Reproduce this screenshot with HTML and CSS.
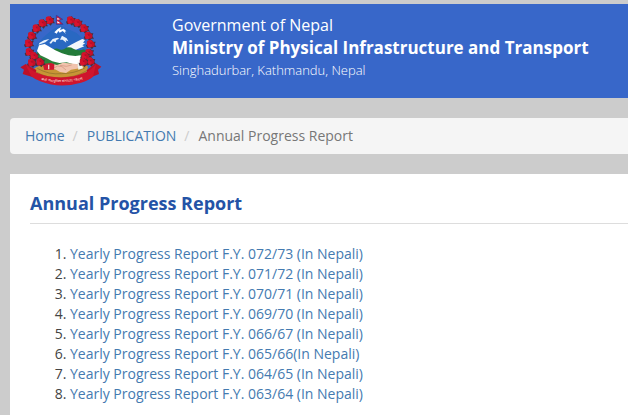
FILE: index.html
```html
<!DOCTYPE html>
<html lang="en">

<head>
    <meta charset="UTF-8" />
    <meta name="viewport" content="width=device-width, initial-scale=1.0" />
    <title>Annual Progress Report</title>
    <link rel="stylesheet" href="styles.css">
</head>

<body>
    <div class="wrapper">
        <header class="header">
            <svg class="logo" viewBox="60 45 246 216" role="img" aria-label="Emblem of Nepal">
                <defs>
                    <g id="flower">
                        <path d="M-14 5l6-4-2-9 8 2 5-6 5 6 7 0-3 8 5 8-8 0-5 7-6-6-9 2z" fill="#4a2f3a" />
                        <circle r="9" cx="-2" cy="-2" fill="#d3122b" />
                        <circle r="8" cx="4" cy="2" fill="#c20f28" />
                        <circle r="7" cx="-3" cy="5" fill="#d8142d" />
                        <circle r="2" cx="1" cy="-1" fill="#a50d2a" />
                    </g>
                    <path id="motto" d="M98 234Q180 266 272 234" />
                </defs>
                <!-- hills and mountains -->
                <path d="M105 142L135 110 160 90 182 79 205 91 230 102 252 122 260 140 255 190 110 190z" fill="#2968c2" />
                <path d="M163 100l10-10 11-6-4 9 11-4 8 8-5 1 4 7-10-9-9 5-4-5-5 8z" fill="#fff" />
                <path d="M148 132l10-12 14-4 6 3-9 4-2 7-8-3-6 7zM180 122l6-12 14 8 5 9-8-3 2 7-11-9zM118 132l14-8 16-4-12 10-20 7z" fill="#e8f1fb" />
                <path d="M200 145l13-8 17-9 17-8 8 3-6 8 7 1-9 7 6 3-13 5-16 7-9-5z" fill="#f3f7fc" />
                <path d="M160 150q9-3 14-1 10 6 20 0 13-8 26 0 16 9 32 2l11 8-10 30-126-1z" fill="#237b39" />
                <path d="M110 158l18 10 27 3 29 8 29 6 20-2v17H119z" fill="#2e813b" />
                <!-- map -->
                <path d="M117 139l17-4 14 8 18 11 20 9 20 6 20 2 16-2-1 25-20 2-21-6-22 2-21-5-17-9-19-9-10-13z" fill="#fff" />
                <!-- rice and clasped hands -->
                <path d="M101 211q20-18 41-7 43 14 88-4 22-8 34 3l-9 35q-75 25-145-4z" fill="#c79535" />
                <path d="M106 218q40 22 78 18 43 0 76-21M112 208q35 20 72 16 40 0 72-18" fill="none" stroke="#8b6b29" stroke-width="2" />
                <path d="M132 198l24-4 15 4 18-7 48 5 2 12-26 4-15 10-18-3-15-8-32-3z" fill="#f1c3ad" />
                <path d="M160 208l13-7 13 2 12 10M180 199l19 3 16-4" fill="none" stroke="#cf917b" stroke-width="2" />
                <path d="M128 195l25-3 10 4-1 16-29 1z" fill="#cf1830" />
                <path d="M144 197l4 0v14h-4z" fill="#f2cfca" />
                <path d="M232 190l11-3 6 21-14 4z" fill="#f0f4ed" />
                <!-- wreath -->
                <use href="#flower" x="148" y="63" />
                <use href="#flower" x="127" y="72" />
                <use href="#flower" x="109" y="87" />
                <use href="#flower" x="95" y="109" />
                <use href="#flower" x="86" y="132" />
                <use href="#flower" x="88" y="158" />
                <use href="#flower" x="102" y="170" />
                <use href="#flower" x="95" y="190" />
                <use href="#flower" x="120" y="188" />
                <use href="#flower" x="212" y="63" />
                <use href="#flower" x="233" y="71" />
                <use href="#flower" x="252" y="87" />
                <use href="#flower" x="265" y="109" />
                <use href="#flower" x="272" y="134" />
                <use href="#flower" x="267" y="160" />
                <use href="#flower" x="255" y="170" />
                <use href="#flower" x="271" y="186" />
                <use href="#flower" x="250" y="188" />
                <!-- flag -->
                <path d="M169 49l19 12-11 3 12 12h-20z" fill="#d4173a" stroke="#213d9d" stroke-width="2" />
                <path d="M172 56l8 5-8 1zM172 66l9 7h-9z" fill="#fff" />
                <!-- ribbon -->
                <path d="M77 195l-16 10 11 7-4 13 36 11 5-23z" fill="#bd1028" />
                <path d="M287 193l17 10-10 9 3 13-31 13-6-24z" fill="#bd1028" />
                <path d="M76 196q16 17 30 24 76 31 152 0 18-8 30-24l-9 37q-12 11-36 18-64 19-122-4-16-5-27-15z" fill="#cf152d" />
                <text class="motto"><textPath href="#motto" startOffset="50%">जननी जन्मभूमिश्च स्वर्गादपि गरीयसी</textPath></text>
            </svg>
            <div class="title">
                <div class="gov">Government of Nepal</div>
                <h1>Ministry of Physical Infrastructure and Transport</h1>
                <div class="address">Singhadurbar, Kathmandu, Nepal</div>
            </div>
        </header>

        <nav aria-label="Breadcrumb">
            <ol class="breadcrumb">
                <li><a href="#">Home</a></li>
                <li><a href="#">PUBLICATION</a></li>
                <li class="active">Annual Progress Report</li>
            </ol>
        </nav>

        <main class="content">
            <h2>Annual Progress Report</h2>
            <ol class="reports">
                <li><a href="#">Yearly Progress Report F.Y. 072/73 (In Nepali)</a></li>
                <li><a href="#">Yearly Progress Report F.Y. 071/72 (In Nepali)</a></li>
                <li><a href="#">Yearly Progress Report F.Y. 070/71 (In Nepali)</a></li>
                <li><a href="#">Yearly Progress Report F.Y. 069/70 (In Nepali)</a></li>
                <li><a href="#">Yearly Progress Report F.Y. 066/67 (In Nepali)</a></li>
                <li><a href="#">Yearly Progress Report F.Y. 065/66(In Nepali)</a></li>
                <li><a href="#">Yearly Progress Report F.Y. 064/65 (In Nepali)</a></li>
                <li><a href="#">Yearly Progress Report F.Y. 063/64 (In Nepali)</a></li>
            </ol>
        </main>
    </div>
</body>

</html>
```
FILE: styles.css
```css
* {
    box-sizing: border-box;
}

body {
    margin: 0;
    font-family: "Open Sans", sans-serif;
    font-size: 14px;
    line-height: 20px;
    color: #444;
    background: #ccc;
}

a {
    color: #447ab0;
    text-decoration: none;
}

a:hover {
    text-decoration: underline;
}

.wrapper {
    display: flex;
    flex-direction: column;
    gap: 20px;
    min-height: 100vh;
    padding: 4px 0 0 10px;
}

.header {
    display: flex;
    align-items: flex-start;
    gap: 70px;
    padding: 10px;
    min-height: 94px;
    color: #fff;
    background: #3867c9;
}

.logo {
    flex: none;
    width: 82px;
    height: 72px;
}

.motto {
    font-size: 10px;
    text-anchor: middle;
    fill: #f6dcd8;
}

.gov {
    font-size: 16px;
    line-height: 22px;
}

.header h1 {
    margin: 0;
    font-size: 17px;
    font-weight: 700;
    line-height: 24px;
}

.address {
    font-size: 13px;
    font-weight: 300;
    line-height: 20px;
}

.breadcrumb {
    display: flex;
    margin: 0;
    padding: 8px 15px;
    list-style: none;
    background: #f5f5f5;
    border-radius: 4px 0 0 4px;
}

.breadcrumb li + li::before {
    content: "/";
    padding: 0 9px 0 8px;
    color: #ccc;
}

.breadcrumb .active {
    color: #777;
}

.content {
    flex: 1;
    padding: 19px 0 10px 20px;
    background: #fff;
}

.content h2 {
    margin: 0 0 20px;
    padding-bottom: 10px;
    font-size: 18px;
    font-weight: 700;
    line-height: 20px;
    color: #2453a6;
    border-bottom: 1px solid #ddd;
}

.reports {
    margin: 0;
    padding-left: 40px;
}
```
